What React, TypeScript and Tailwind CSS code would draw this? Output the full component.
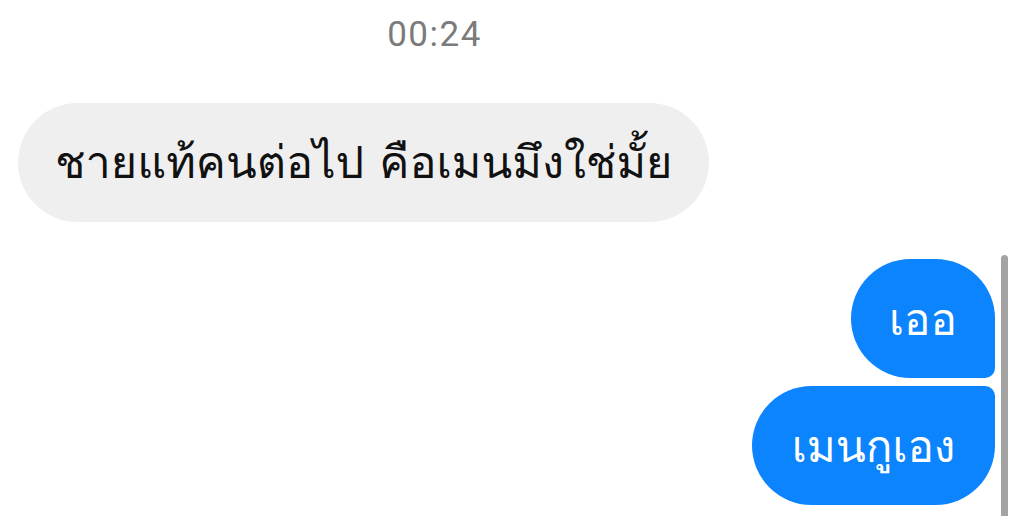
export default function App() {
  return (
    <div className="w-[1019px] h-[516px] bg-white overflow-hidden relative font-['Loma','Noto_Sans',sans-serif]">
      <div className="flex flex-col">
        <div className="h-[70px] flex items-center justify-center pr-[150px] text-[35px] text-[#7b7b7b] tracking-[1.5px] font-['Roboto',sans-serif]">
          00:24
        </div>
        <div className="pl-[18px] pt-[33px]">
          <div className="inline-flex items-center h-[119px] pl-[37px] pr-[37px] rounded-full bg-[#efefef] text-[45px] text-[#111]">
            ชายแท้คนต่อไป คือเมนมึงใช่มั้ย
          </div>
        </div>
        <div className="flex flex-col items-end pr-[24px] pt-[37px] gap-[8px]">
          <div className="flex items-center justify-center h-[119px] w-[144px] bg-[#0b84fe] text-white text-[44px] rounded-l-[60px] rounded-tr-[60px] rounded-br-[10px]">
            เออ
          </div>
          <div className="flex items-center justify-center h-[119px] w-[243px] bg-[#0b84fe] text-white text-[44px] rounded-l-[60px] rounded-br-[60px] rounded-tr-[10px]">
            เมนกูเอง
          </div>
        </div>
      </div>
      <div className="absolute left-[1001px] top-[255px] w-[7px] h-[270px] rounded-t-full bg-[#a3a3a3]" />
    </div>
  );
}
